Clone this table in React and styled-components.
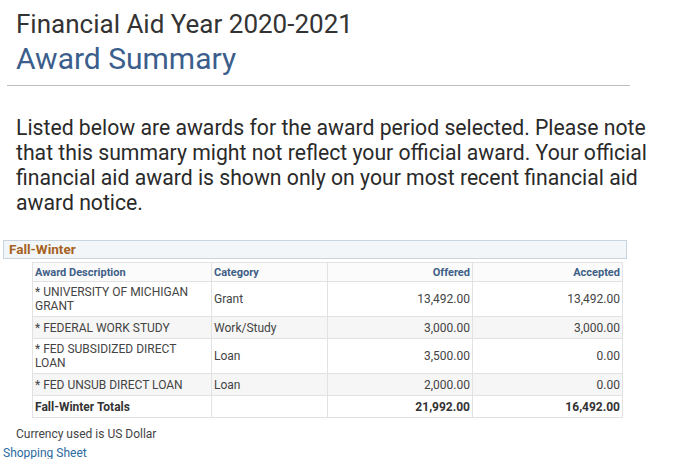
import React from "react";
import styled, { createGlobalStyle } from "styled-components";

const GlobalStyle = createGlobalStyle`
  body {
    margin: 0;
    background: #fff;
    font-family: Roboto, "Liberation Sans", sans-serif;
  }
`;

const Page = styled.div`
  width: 684px;
  height: 459px;
  overflow: hidden;
  padding-top: 10px;
  box-sizing: border-box;
`;

const Header = styled.div`
  padding-left: 16px;
`;

const Year = styled.div`
  font-size: 26px;
  line-height: 28px;
  color: #333;
`;

const Title = styled.h1`
  margin: 3px 0 0;
  font-size: 30px;
  font-weight: 400;
  line-height: 36px;
  color: #3b5e8c;
`;

const Rule = styled.hr`
  margin: 8px 0 0 7px;
  width: 623px;
  border: none;
  border-top: 1px solid #bdbdbd;
`;

const Intro = styled.p`
  margin: 29px 0 0 16px;
  width: 660px;
  font-size: 21.2px;
  line-height: 25px;
  color: #2a2a2a;
`;

const GroupBar = styled.div`
  margin: 25px 0 0 3px;
  width: 617px;
  height: 17px;
  border: 1px solid #c9d5de;
  background: #f3f6f8;
  padding-left: 5px;
  font-size: 13.5px;
  font-weight: 700;
  line-height: 17px;
  color: #a6621f;
`;

const Table = styled.table`
  margin: 3px 0 0 32px;
  border-collapse: collapse;
  font-size: 12px;
  color: #444;
  table-layout: fixed;
  width: 590px;
`;

const Th = styled.th`
  height: 18px;
  padding: 0 2px;
  font-size: 11px;
  font-weight: 700;
  color: #3f5f86;
  text-align: ${(p) => (p.$right ? "right" : "left")};
  border: 1px solid #e2e2e2;
  background: #fbfbfb;
`;

const Row = styled.tr`
  background: ${(p) => (p.$shade ? "#f6f6f6" : "#fff")};
`;

const Td = styled.td`
  height: ${(p) => (p.$tall ? "34px" : "21px")};
  padding: 0 2px;
  line-height: 14px;
  text-align: ${(p) => (p.$right ? "right" : "left")};
  font-weight: ${(p) => (p.$bold ? 700 : 400)};
  color: ${(p) => (p.$bold ? "#333" : "#444")};
  border: 1px solid #e2e2e2;
`;

const Note = styled.div`
  margin: 9px 0 0 16px;
  font-size: 12px;
  color: #444;
`;

const Link = styled.a`
  display: block;
  margin: 5px 0 0 3px;
  font-size: 12px;
  color: #2c6aa0;
  text-decoration: none;
`;

const awards = [
  { desc: "* UNIVERSITY OF MICHIGAN GRANT", cat: "Grant", offered: "13,492.00", accepted: "13,492.00", tall: true },
  { desc: "* FEDERAL WORK STUDY", cat: "Work/Study", offered: "3,000.00", accepted: "3,000.00", shade: true },
  { desc: "* FED SUBSIDIZED DIRECT LOAN", cat: "Loan", offered: "3,500.00", accepted: "0.00", tall: true },
  { desc: "* FED UNSUB DIRECT LOAN", cat: "Loan", offered: "2,000.00", accepted: "0.00", shade: true },
];

export default function App() {
  return (
    <Page>
      <GlobalStyle />
      <Header>
        <Year>Financial Aid Year 2020-2021</Year>
        <Title>Award Summary</Title>
      </Header>
      <Rule />
      <Intro>
        Listed below are awards for the award period selected. Please note
        that this summary might not reflect your official award. Your official
        financial aid award is shown only on your most recent financial aid
        award notice.
      </Intro>
      <GroupBar>Fall-Winter</GroupBar>
      <Table>
        <colgroup>
          <col style={{ width: 179 }} />
          <col style={{ width: 116 }} />
          <col style={{ width: 145 }} />
          <col style={{ width: 150 }} />
        </colgroup>
        <thead>
          <tr>
            <Th>Award Description</Th>
            <Th>Category</Th>
            <Th $right>Offered</Th>
            <Th $right>Accepted</Th>
          </tr>
        </thead>
        <tbody>
          {awards.map((a) => (
            <Row key={a.desc} $shade={a.shade}>
              <Td $tall={a.tall}>{a.desc}</Td>
              <Td>{a.cat}</Td>
              <Td $right>{a.offered}</Td>
              <Td $right>{a.accepted}</Td>
            </Row>
          ))}
          <Row>
            <Td $bold>Fall-Winter Totals</Td>
            <Td />
            <Td $right $bold>21,992.00</Td>
            <Td $right $bold>16,492.00</Td>
          </Row>
        </tbody>
      </Table>
      <Note>Currency used is US Dollar</Note>
      <Link href="#">Shopping Sheet</Link>
    </Page>
  );
}
